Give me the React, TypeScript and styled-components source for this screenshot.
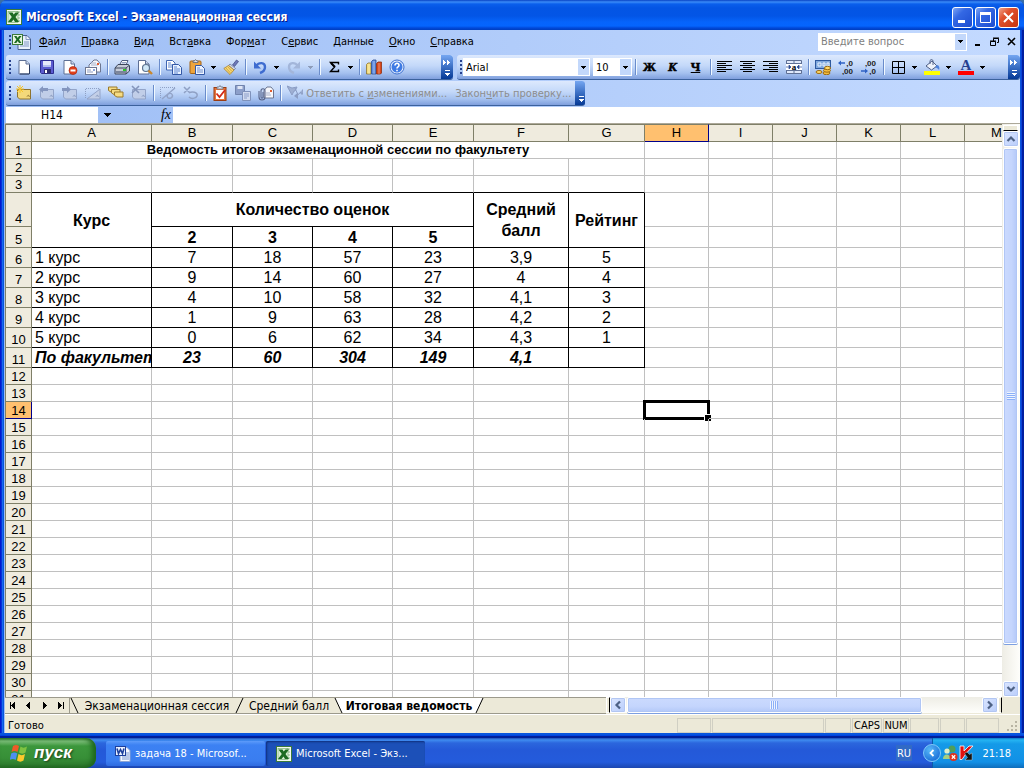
import React from "react";
import styled, { createGlobalStyle, css } from "styled-components";

const ui = `"DejaVu Sans Condensed", "DejaVu Sans", sans-serif`;
const arial = `"Liberation Sans", Arial, sans-serif`;

const GlobalStyle = createGlobalStyle`
  * { box-sizing: border-box; }
  html, body, #root { height: 100%; }
  body { margin: 0; overflow: hidden; font-family: ${ui}; font-size: 11px; color: #000; }
  button, input, select { font: inherit; color: inherit; margin: 0; padding: 0; border: 0; border-radius: 0; background: none; }
  svg { display: block; flex: none; }
`;

/* ---------- Window frame ---------- */

const Desktop = styled.div`
  display: flex;
  flex-direction: column;
  height: 100vh;
  background: #3a6ea5;
`;

const Window = styled.main`
  flex: 1;
  min-height: 0;
  display: flex;
  flex-direction: column;
  background: linear-gradient(90deg, #0019cf 0 1px, #0831d9 1px 2px, #166aee 2px 3px, #0855dd 3px calc(100% - 3px), #0a41d8 calc(100% - 3px) calc(100% - 2px), #001ea0 calc(100% - 2px));
  border-radius: 7px 7px 0 0;
  overflow: hidden;
`;

const TitleBar = styled.header`
  display: flex;
  align-items: center;
  height: 30px;
  flex: none;
  padding: 4px 5px 0 6px;
  background: linear-gradient(#0842c4 0, #3b8bf8 2px, #0a5fec 4px, #0455e4 8px, #0355e6 16px, #0664fb 22px, #0565fd 26px, #0148d8 28px, #003dbd 30px);
`;

const WindowTitle = styled.h1`
  flex: 1;
  margin: 0 0 0 4px;
  font: bold 12px/20px "DejaVu Sans Condensed", "DejaVu Sans", sans-serif;
  color: #fff;
  text-shadow: 1px 1px 0 #0a1883;
  white-space: nowrap;
`;

const CaptionButton = styled.button<{ $close?: boolean }>`
  display: grid;
  place-items: center;
  width: 21px;
  height: 21px;
  margin-left: 2px;
  border: 1px solid #fff;
  border-radius: 3px;
  background: ${(p) =>
    p.$close
      ? "linear-gradient(135deg, #f0a48c, #e0512e 35%, #c8350e)"
      : "linear-gradient(135deg, #7ea6f5, #3468e4 35%, #1c4cd0)"};
`;

const Client = styled.div`
  flex: 1;
  min-height: 0;
  display: flex;
  flex-direction: column;
  margin: 0 4px;
  padding-left: 1px;
  background: linear-gradient(90deg, #9ebef5, #c4daff);
`;

const WindowBottom = styled.div`
  flex: none;
  height: 5px;
  background: linear-gradient(#0855dd 0 2px, #0043e0 2px 3px, #001f9a 3px);
`;

/* ---------- Menus and toolbars ---------- */

const MenuBar = styled.nav`
  display: flex;
  align-items: center;
  height: 25px;
  flex: none;
  padding: 0 0 2px 1px;
`;

const MenuItem = styled.button`
  height: 20px;
  padding: 0 8px 0 7px;
  white-space: nowrap;
`;

const Grip = styled.span`
  flex: none;
  width: 6px;
  height: 14px;
  background: repeating-linear-gradient(#27418e 0 2px, transparent 2px 4px) 3px 0 / 2px 14px no-repeat;
`;

const Spacer = styled.span`
  flex: 1;
`;

const Gap = styled.span`
  flex: none;
  width: 3px;
`;

const Question = styled.label`
  display: flex;
  width: 149px;
  height: 18px;
  margin: 0 2px 0 0;
  background: #fff;
  border: 1px solid #fff;

  input { flex: 1; min-width: 0; padding-left: 2px; outline: 0; }
  input::placeholder { color: #7f7f7f; opacity: 1; }
`;

const DropCap = styled.span`
  display: grid;
  place-items: center;
  width: 11px;
  background: #c3d8fb;
`;

const MdiButton = styled.button`
  display: grid;
  place-items: center;
  width: 17px;
  height: 18px;
`;

const ToolRow = styled.div`
  display: flex;
  height: 26px;
  flex: none;
  padding: 0 0 1px 1px;
  gap: 4px;
`;

const Bar = styled.div<{ $grow?: boolean; $width?: number }>`
  display: flex;
  align-items: center;
  height: 25px;
  overflow: hidden;
  border-radius: 3px;
  border-bottom: 1px solid #3b619c;
  background: linear-gradient(#dde9fd, #c3d8f9 45%, #a5c1ef 75%, #7f9fdd);
  ${(p) => (p.$grow ? css`flex: 1; min-width: 0;` : css`width: ${p.$width}px; flex: none;`)}
`;

const Tool = styled.button`
  flex: none;
  display: grid;
  place-items: center;
  width: 23px;
  height: 22px;
`;

const Drop = styled.button`
  flex: none;
  display: grid;
  place-items: center;
  width: 11px;
  height: 22px;
`;

const FormulaDrop = styled(Drop)`
  height: 16px;
`;

const Divider = styled.span`
  flex: none;
  width: 2px;
  height: 16px;
  margin: 0 1px 0 3px;
  background: linear-gradient(90deg, #6a8ccb 50%, #f1f9ff 50%);
`;

const BarEnd = styled.button`
  flex: none;
  display: flex;
  flex-direction: column;
  justify-content: space-between;
  align-items: center;
  width: 12px;
  height: 24px;
  padding: 5px 0 3px;
  background: linear-gradient(#75a6f1, #3b6fc4 50%, #053995);
  border-radius: 0 3px 3px 0;
`;

const Combo = styled.label<{ $width: number }>`
  display: flex;
  flex: none;
  width: ${(p) => p.$width}px;
  height: 18px;
  background: #fff;
  padding: 1px;

  select { flex: 1; min-width: 0; appearance: none; padding-left: 2px; outline: 0; }
`;

const TextTool = styled.button`
  display: flex;
  align-items: center;
  flex: none;
  height: 22px;
  padding: 0 4px;
  color: #8d8d8d;
  white-space: nowrap;
`;

const Letter = styled.b<{ $italic?: boolean; $under?: boolean }>`
  font: bold 13px/14px "Liberation Serif", serif;
  -webkit-text-stroke: 0.5px #000;
  font-style: ${(p) => (p.$italic ? "italic" : "normal")};
  text-decoration: ${(p) => (p.$under ? "underline" : "none")};
`;

/* ---------- Formula bar ---------- */

const FormulaBar = styled.div`
  display: flex;
  height: 16px;
  flex: none;
  padding-left: 1px;
`;

const NameBox = styled.input`
  width: 92px;
  height: 16px;
  background: #fff;
  text-align: center;
  font-size: 12px;
  outline: 0;
`;

const FormulaTools = styled.div`
  display: flex;
  justify-content: space-between;
  align-items: center;
  width: 75px;
  padding: 0 2px 0 4px;
`;

const FxButton = styled.button`
  font: italic 14px/14px "Liberation Serif", serif;
`;

const FormulaInput = styled.input`
  flex: 1;
  min-width: 0;
  background: #fff;
  outline: 0;
`;

/* ---------- Sheet ---------- */

const SheetArea = styled.div`
  flex: 1;
  min-height: 0;
  display: flex;
  background: #fff;
  border-top: 1px solid #aca899;
`;

const GridView = styled.div`
  flex: 1;
  min-width: 0;
  overflow: hidden;
`;

const Grid = styled.table<{ $width: number }>`
  table-layout: fixed;
  width: ${(p) => p.$width}px;
  border-collapse: separate;
  border-spacing: 0;
  font-family: ${arial};
  font-size: 16px;
  line-height: 18px;
`;

const ColHead = styled.th<{ $on?: boolean }>`
  height: 18px;
  padding: 0;
  border: solid #7f7f68;
  border-width: 1px 1px 1px 0;
  background: ${(p) => (p.$on ? "#ffc06f" : "#efebde")};
  ${(p) => p.$on && css`border-right-color: #00008b; border-bottom-color: #00008b;`}
  font-weight: normal;
  font-size: 13px;
  line-height: 16px;
`;

const Corner = styled(ColHead)`
  border-left-width: 1px;
`;

const RowHead = styled.th<{ $on?: boolean }>`
  padding: 0;
  vertical-align: bottom;
  border: solid #7f7f68;
  border-width: 0 1px 1px 1px;
  background: ${(p) => (p.$on ? "#ffc06f" : "#efebde")};
  ${(p) => p.$on && css`border-right-color: #00008b; border-bottom-color: #00008b;`}
  font-weight: normal;
  font-size: 13px;
  line-height: 15px;
`;

const Row = styled.tr<{ $h: number }>`
  height: ${(p) => p.$h}px;
`;

type CellProps = { $right?: string; $bottom?: string; $left?: boolean; $bold?: boolean; $italic?: boolean; $title?: boolean };

const Cell = styled.td<CellProps>`
  position: relative;
  padding: ${(p) => (p.$left ? "0 0 0 3px" : "0")};
  border: solid;
  border-width: 0 1px 1px 0;
  border-color: transparent ${(p) => p.$right ?? "#c0c0c0"} ${(p) => p.$bottom ?? "#c0c0c0"} transparent;
  text-align: ${(p) => (p.$left ? "left" : "center")};
  font-weight: ${(p) => (p.$bold ? "bold" : "normal")};
  font-style: ${(p) => (p.$italic ? "italic" : "normal")};
  line-height: ${(p) => (p.$title ? 16 : 19)}px;
  ${(p) => p.$title && css`font-size: 13px;`}
  white-space: nowrap;
  overflow: ${(p) => (p.$left ? "hidden" : "visible")};
`;

const HeadCell = styled(Cell)`
  line-height: 21px;
`;

const Selection = styled.span`
  position: absolute;
  inset: -2px;
  border: 3px solid #000;

  &::after {
    content: "";
    position: absolute;
    right: -4px;
    bottom: -4px;
    width: 6px;
    height: 6px;
    background: #000;
    border: solid #fff;
    border-width: 1px 0 0 1px;
  }
`;

/* ---------- Scroll bars ---------- */

const VerticalScroll = styled.div`
  flex: none;
  display: flex;
  flex-direction: column;
  width: 18px;
  padding: 1px 2px 0 1px;
  background: linear-gradient(90deg, #eeede5, #fefefb);
`;

const SplitBox = styled.span<{ $side?: boolean }>`
  flex: none;
  background: #ece9d8;
  border: 1px solid #fff;
  ${(p) =>
    p.$side
      ? css`width: 4px; height: 16px; border-right: 1px solid #000;`
      : css`height: 6px; border-bottom: 1px solid #000;`}
`;

const ScrollButton = styled.button`
  flex: none;
  display: grid;
  place-items: center;
  width: 16px;
  height: 16px;
  border: 1px solid #fff;
  border-radius: 2px;
  background: linear-gradient(135deg, #dbe6ff, #b9cdfb);
  box-shadow: inset 0 0 0 1px #b2c6f2;
`;

const Track = styled.div<{ $across?: boolean }>`
  flex: 1;
  min-height: 0;
  min-width: 0;
  display: flex;
  flex-direction: ${(p) => (p.$across ? "row" : "column")};
  padding: ${(p) => (p.$across ? "0 0 0 1px" : "1px 0 0")};
`;

const Thumb = styled.div<{ $across?: boolean; $size: number }>`
  flex: ${(p) => p.$size} 1 0;
  display: grid;
  place-items: center;
  border: 1px solid #fff;
  border-radius: 2px;
  box-shadow: inset 0 0 0 1px #b0c6f5, 0 1px 0 #7d9fe0;
  background: linear-gradient(${(p) => (p.$across ? "180deg" : "90deg")}, #cbdafe, #c4d5fd 60%, #b3c8f8);
`;

const TrackRest = styled.div<{ $size: number }>`
  flex: ${(p) => p.$size} 1 0;
`;

const Ridges = styled.span<{ $across?: boolean }>`
  width: 8px;
  height: 8px;
  background: repeating-linear-gradient(${(p) => (p.$across ? "90deg" : "180deg")}, #eef4fe 0 1px, #8cb0f8 1px 2px);
`;

/* ---------- Tab strip and status bar ---------- */

const SheetFooter = styled.div`
  flex: none;
  display: flex;
  height: 18px;
  background: #ece9d8;
  border-bottom: 1px solid #fff;
`;

const TabStrip = styled.div`
  flex: 600 1 0;
  min-width: 0;
  display: flex;
  height: 17px;
  overflow: hidden;
  border: solid #9c9a8c;
  border-width: 1px 0;
`;

const TabNav = styled.button`
  flex: none;
  display: grid;
  place-items: center;
  width: 16px;
`;

const TabStart = styled.span`
  flex: none;
  width: 1px;
  background: #9c9a8c;
`;

const Tab = styled.button<{ $active?: boolean; $width: number }>`
  flex: none;
  width: ${(p) => p.$width}px;
  background: ${(p) => (p.$active ? "#fff" : "transparent")};
  font-weight: ${(p) => (p.$active ? "bold" : "normal")};
  font-size: 12px;
  line-height: 14px;
  white-space: nowrap;
`;

const HorizontalScroll = styled.div`
  flex: 396 1 0;
  display: flex;
  height: 16px;
  margin-right: 18px;
  background: linear-gradient(#eeede5, #fefefb);
`;

const StatusBar = styled.footer`
  flex: none;
  display: flex;
  align-items: center;
  gap: 1px;
  height: 18px;
  padding: 3px 1px 0 3px;
  background: #ece9d8;
`;

const StatusText = styled.span`
  flex: 1;
`;

const StatusCell = styled.span<{ $width: number }>`
  width: ${(p) => p.$width}px;
  height: 15px;
  border: 1px solid #d0cfc3;
  text-align: center;
  line-height: 14px;
  white-space: nowrap;
`;

/* ---------- Taskbar ---------- */

const Taskbar = styled.footer`
  flex: none;
  display: flex;
  height: 30px;
  color: #fff;
  background: linear-gradient(#1f4fb8 0, #3f8cf0 2px, #2b66dd 5px, #2459d8 12px, #245bdc 24px, #1c46b0 30px);
`;

const StartButton = styled.button`
  flex: none;
  display: flex;
  align-items: center;
  gap: 4px;
  width: 96px;
  padding-left: 10px;
  border-radius: 0 10px 10px 0;
  background: linear-gradient(#2f7d2f 0, #7fc07c 3px, #3c973c 8px, #378f37 20px, #2f7f2f 26px, #246a24);
  box-shadow: inset -4px 0 5px #1e671e;
  font: italic bold 17px/24px ${arial};
  text-shadow: 1px 1px 2px #1c3f1c;
`;

const Task = styled.button<{ $active?: boolean }>`
  flex: none;
  display: flex;
  align-items: center;
  gap: 4px;
  width: 159px;
  height: 25px;
  margin: 3px 0 0 ${(p) => (p.$active ? 1 : 10)}px;
  padding-left: ${(p) => (p.$active ? 10 : 9)}px;
  border-radius: 2px;
  background: ${(p) => (p.$active ? "#1c50b8" : "linear-gradient(#5d9bfa, #3c81f3 4px, #3a7df0 20px, #2f6be0)")};
  box-shadow: ${(p) => (p.$active ? "inset 1px 1px 2px #0f2f7c" : "none")};
  white-space: nowrap;
`;

const Language = styled.button`
  align-self: center;
  width: 16px;
  height: 16px;
  margin: 0 20px 0 auto;
  background: #316ac5;
`;

const Tray = styled.div`
  flex: none;
  display: flex;
  align-items: center;
  width: 92px;
  padding-right: 13px;
  background: linear-gradient(#0d78c8 0, #25b4f2 2px, #149ae8 6px, #1290e6 24px, #0f6dbb);
  border-left: 1px solid #0d5aa8;
`;

const TrayToggle = styled.button`
  display: grid;
  place-items: center;
  width: 18px;
  height: 18px;
  margin: 0 1px 0 -10px;
  border-radius: 9px;
  border: 1px solid #7fc8f8;
  background: radial-gradient(circle at 6px 5px, #58b8f8, #0a5cd0);
`;

const Clock = styled.time`
  margin-left: auto;
`;

/* ---------- Glyphs ---------- */

const Caret = ({ color = "#000" }: { color?: string }) => (
  <svg width="5" height="3" viewBox="0 0 5 3" shapeRendering="crispEdges">
    <path d="M0 0h5v1H4v1H3v1H2V2H1V1H0z" fill={color} />
  </svg>
);

const WideCaret = () => (
  <svg width="7" height="4" viewBox="0 0 7 4" shapeRendering="crispEdges">
    <path d="M0 0h7v1H6v1H5v1H4v1H3V3H2V2H1V1H0z" />
  </svg>
);

const Chevron = ({ turn }: { turn: number }) => (
  <svg width="10" height="10" viewBox="0 0 10 10">
    <path d="M1.5 7 5 3.5 8.5 7" fill="none" stroke="#4d6185" strokeWidth="2.2" transform={`rotate(${turn} 5 5)`} />
  </svg>
);

const Svg = ({ children, size = 16 }: { children: React.ReactNode; size?: number }) => (
  <svg width={size} height={size} viewBox="0 0 16 16">{children}</svg>
);

const page = "M3 1.5h7l3.500 3.500v10H3z";

const ExcelIcon = ({ size = 16 }: { size?: number }) => (
  <Svg size={size}>
    <rect x=".5" y=".5" width="15" height="15" fill="#f4faf0" stroke="#3c7a3a" />
    <path d="M10 3h4M10 6h4M10 9h4M10 12h4" stroke="#8fb88c" />
    <rect x="2" y="2.500" width="10" height="11" fill="#d9efd3" stroke="#6aa565" strokeWidth=".6" />
    <path d="M2.500 3.500h4l1.200 2 1.800-2h3.500L9.500 8l3.500 5h-4L7.500 10.500 5.500 13H2L5.800 8z" fill="#1d6b23" />
  </Svg>
);

const WorkbookIcon = () => (
  <svg width="20" height="18" viewBox="0 0 20 18">
    <path d="M6 2.500h9l3.500 3.500v10.500H6z" fill="#e9f0fc" stroke="#48608f" />
    <path d="M12 9h5M12 11h5M8 13h9M14 3v3.500h4" fill="none" stroke="#8398c4" />
    <rect x=".5" y="1.500" width="10" height="10" fill="#e6f5e0" stroke="#3c7a3a" />
    <path d="M2 3h2.500l1.200 2L7 3h2.500L7 6.500 9.500 10H7L5.700 8 4.300 10H2l2.400-3.500z" fill="#1d6b23" />
  </svg>
);

const WordIcon = () => (
  <Svg>
    <path d="M5 1.500h7l3 3v11H5z" fill="#f5f8ff" stroke="#8ba3d4" />
    <path d="M11 7h3M11 9h3M7 11h7M7 13h7" stroke="#7b97cf" />
    <rect x=".5" y=".5" width="10" height="9" fill="#e8f0ff" stroke="#1d3f9c" />
    <path d="M2 2.500 3.500 7.500 5.500 3.500 7.500 7.500 9 2.500" fill="none" stroke="#1d3f9c" strokeWidth="1.600" />
  </Svg>
);

const NewIcon = () => (
  <Svg>
    <path d={page} fill="#fff" stroke="#5d6f94" />
    <path d="M10 1.500v3.500h3.500" fill="#cdd9ef" stroke="#5d6f94" />
    <path d="M13.500 6v9M4 15h9" stroke="#2b3c62" />
  </Svg>
);

const SaveIcon = () => (
  <Svg>
    <path d="M1.500 1.500h13v13h-12l-1-1z" fill="#5b5bd0" stroke="#2c2c91" />
    <path d="M4 2h8v6H4z" fill="#e6e9fb" />
    <path d="M4 6h8v2H4z" fill="#b6bfee" />
    <path d="M5 10h7v4.500H5z" fill="#2c2c70" />
    <path d="M6 11h2v3H6z" fill="#fff" />
  </Svg>
);

const PermissionIcon = () => (
  <Svg>
    <path d="M2 1.500h7l3.500 3.500v10H2z" fill="#fff" stroke="#5d6f94" />
    <path d="M9 1.500v3.500h3.500" fill="#cdd9ef" stroke="#5d6f94" />
    <circle cx="11" cy="11.500" r="4" fill="#e2401c" stroke="#a82208" strokeWidth=".6" />
    <path d="M8.500 11.500h5" stroke="#fff" strokeWidth="1.800" />
  </Svg>
);

const MailIcon = () => (
  <Svg>
    <path d="M4 6 9 1h3l3.500 4v8H4z" fill="#f6f7fb" stroke="#6c7690" />
    <path d="M6 6h7M6 4h5" stroke="#a8b2ca" />
    <path d="M12 4h2v2h-2z" fill="#e35b2c" />
    <rect x=".5" y="8.500" width="11" height="7" fill="#fff" stroke="#6c7690" />
    <path d="M2 11h4M2 13h6" stroke="#8b9ac0" />
    <path d="M8 10h2v2H8z" fill="#8ba6dc" />
  </Svg>
);

const PrintIcon = () => (
  <Svg>
    <path d="M5.500 6 8 1.500h6L12 6z" fill="#fff" stroke="#4d5c80" />
    <path d="M8 3.500h4M7.500 5h4" stroke="#92a2c5" />
    <path d="M1 9l3-3.500h10.500l1 1.500v5L12 15H1z" fill="#c6ccd8" stroke="#3d465c" />
    <path d="M1 9h11l3-2.500M12 9v6" fill="none" stroke="#3d465c" />
    <path d="M1.500 12h10v2h-10z" fill="#7b859b" />
    <path d="M9 10h3v2H9z" fill="#28c828" />
  </Svg>
);

const PreviewIcon = () => (
  <Svg>
    <path d="M1.500 1.500h7l3.500 3.500v10h-10.500z" fill="#fff" stroke="#5d6f94" />
    <path d="M8.500 1.500v3.500h3.500" fill="#cdd9ef" stroke="#5d6f94" />
    <circle cx="9" cy="9" r="3.500" fill="#cfe7f7" stroke="#5e7390" strokeWidth="1.200" />
    <path d="m11.500 11.500 3.500 3.500" stroke="#c9872c" strokeWidth="2.400" />
  </Svg>
);

const CopyIcon = () => (
  <Svg>
    <path d="M.5 1.500h6l2.500 2.500v7H.5z" fill="#fff" stroke="#3f66b3" />
    <path d="M2 4h3M2 6h5M2 8h5" stroke="#5f87d2" />
    <path d="M6.500 5.500h6l3 3v7h-9z" fill="#e8f1ff" stroke="#3358a6" />
    <path d="M8 8h3M8 10h6M8 12h6M8 14h4" stroke="#5f87d2" />
  </Svg>
);

const PasteIcon = () => (
  <Svg>
    <rect x="1" y="2" width="11" height="12.500" rx="1" fill="#eda43c" stroke="#a26317" />
    <path d="M4 3.500V2h1.500l1-1.500 1.500 1.500H9v1.500z" fill="#dfe3ea" stroke="#5f6675" strokeWidth=".8" />
    <path d="M6.500 6.500h6l3 3v6h-9z" fill="#eef4ff" stroke="#3358a6" />
    <path d="M8 9h3M8 11h6M8 13h6" stroke="#6f8ecb" />
  </Svg>
);

const BrushIcon = () => (
  <Svg>
    <path d="m9.500 6 4-5 2 1.500-4 5z" fill="#6d78b8" stroke="#3d4880" strokeWidth=".7" />
    <path d="m7 5 5.500 4.500-1.500 1.500L5.500 6.500z" fill="#d3d7e6" stroke="#636c8c" strokeWidth=".7" />
    <path d="M5.500 6.500 11 11l-4 4.500L.8 9.500z" fill="#f7d873" stroke="#a9802c" strokeWidth=".8" />
    <path d="m3 9 4.500 5M5 8l4 4.500" stroke="#c79a3a" strokeWidth=".8" />
  </Svg>
);

const UndoIcon = ({ color = "#3e6cd0", flip }: { color?: string; flip?: boolean }) => (
  <Svg>
    <g transform={flip ? "translate(16 0) scale(-1 1)" : undefined}>
      <path d="M4 7c3-4 9-4 9 1 0 3-2 5-5 6" fill="none" stroke={color} strokeWidth="2.400" />
      <path d="M2 2.500v7h7z" fill={color} />
    </g>
  </Svg>
);

const SigmaIcon = () => (
  <Svg>
    <path d="M12.500 5.500V3.500H4.500L8.500 8l-4 4.500h8v-2" fill="none" stroke="#000" strokeWidth="1.400" />
    <path d="m5 4 4 4" stroke="#000" strokeWidth="2" />
  </Svg>
);

const ChartIcon = () => (
  <Svg>
    <path d="M.5 5.500 2 4h3v11H.5z" fill="#f4dc7b" stroke="#8d7430" strokeWidth=".8" />
    <path d="M5.500 2.500 7 1h3v14H5.500z" fill="#5f8ee0" stroke="#2e4f96" strokeWidth=".8" />
    <path d="M10.500 4.500 12 3h3.500v11l-1 1h-4z" fill="#d9491c" stroke="#8f2f10" strokeWidth=".8" />
    <path d="M3 5v10M8 2v13M13 4v11" stroke="#fff" strokeOpacity=".4" />
  </Svg>
);

const HelpIcon = () => (
  <Svg>
    <circle cx="8" cy="8" r="7" fill="#e6eefc" stroke="#3b6fd0" />
    <circle cx="8" cy="8" r="5.500" fill="#3f7be4" />
    <path d="M6 6.500c0-3 4.200-2.800 4 0C9.900 8 8 7.800 8 9.500" fill="none" stroke="#fff" strokeWidth="1.600" />
    <path d="M7.200 10.800h1.600v1.500H7.200z" fill="#fff" />
  </Svg>
);

const note = "M1.500 4.500h13v9.500h-11l-2-2z";

const NoteIcon = ({ kind }: { kind: "new" | "prev" | "next" | "show" | "all" | "delete" }) => {
  const on = kind === "new";
  if (kind === "all")
    return (
      <Svg>
        {[0, 1, 2].map((i) => (
          <path key={i} d={`M${0.5 + i * 3} ${2 + i * 2.5}h8.500v5h-6l-2.500-1.500z`} fill="#f6dc83" stroke="#9b7b2c" />
        ))}
      </Svg>
    );
  return (
    <Svg>
      {kind === "show" ? (
        <>
          <path d="M.5 13V3.500h14" fill="none" stroke="#8fa0c4" strokeDasharray="1 1" />
          <path d="M15 4v10H2z" fill="#c3cfe7" stroke="#93a4c8" />
        </>
      ) : (
        <path d={note} fill={on ? "#f3d87a" : "#c1cee8"} stroke={on ? "#8e7430" : "#93a4c8"} />
      )}
      <path d="M11 11.500c1-2 3-1 2 .500" fill="none" stroke={on ? "#8e7430" : "#8597bd"} />
      {on && <path d="M4 0v8M0 4h8M1 1l6 6M7 1 1 7" stroke="#f8c326" strokeWidth="1" />}
      {kind === "prev" && <path d="M0 4.500 4 1v2h5v3H4v2z" fill="#8496bf" />}
      {kind === "next" && <path d="M9 4.500 5 1v2H0v3h5v2z" fill="#8496bf" />}
      {kind === "delete" && <path d="m1 1 7 7M8 1 1 8" stroke="#8495bb" strokeWidth="1.600" />}
    </Svg>
  );
};

const InkShowIcon = () => (
  <Svg>
    <path d="M.5 13V2.500h15" fill="none" stroke="#8fa0c4" strokeDasharray="1 1" />
    <path d="M2 14 15 3M8 9c4-2 6 2 3 4-3 1-5-1-3-4" fill="none" stroke="#93a4c8" strokeWidth="1.400" />
  </Svg>
);

const InkDeleteIcon = () => (
  <Svg>
    <path d="m1 2 6 6M7 2 1 8M6 8c3-2 9-1 8 3-1 3-6 3-8 1" fill="none" stroke="#8fa0c4" strokeWidth="1.500" />
  </Svg>
);

const TaskIcon = () => (
  <Svg>
    <rect x="2" y="2.500" width="12" height="13" fill="#e8743a" stroke="#9b3c12" />
    <path d="M4 5h8v9H4z" fill="#fff" />
    <path d="M5 4V2h2l1-1.500L9 2h2v2z" fill="#e4e7ee" stroke="#666f83" strokeWidth=".8" />
    <path d="m4.500 8.500 3 3.500L13 5" fill="none" stroke="#d12b1b" strokeWidth="1.800" />
  </Svg>
);

const UpdateIcon = () => (
  <Svg>
    <path d="M.5.500h9v9h-9z" fill="#8c9fca" stroke="#7184ae" />
    <path d="M2.500 1h5v3h-5z" fill="#dfe6f5" />
    <path d="M7.500 6.500h8v9h-8z" fill="#d2dcf0" stroke="#7f92bb" />
    <path d="M9 9h5M9 11h5M9 13h3" stroke="#8c9fca" />
  </Svg>
);

const AttachIcon = () => (
  <Svg>
    <path d="M6 5.500 9 2h4l2.500 3v8H6z" fill="#f6f7fb" stroke="#6c7690" />
    <path d="M8 8h4M8 10h5" stroke="#a8b2ca" />
    <path d="M12 5h2v2h-2z" fill="#e35b2c" />
    <path d="M1 6v6c0 4 6 4 6 0V6c0-3-4-3-4 0v6c0 1.500 2 1.500 2 0V7" fill="none" stroke="#59668a" strokeWidth="1.100" />
  </Svg>
);

const ReplyIcon = () => (
  <Svg>
    <path d="M0 1l5 9 2-4 1 0L10 2 5 3zM8 3l3 7M10 10.500l4-3.500v2h2V5h-1" fill="#9fb0d3" stroke="#8b9dc4" />
    <path d="m7 11 4-3.500V14z" fill="#8b9dc4" />
  </Svg>
);

const AlignIcon = ({ kind }: { kind: "left" | "center" | "right" }) => (
  <Svg>
    <g stroke="#000">
      {[2.5, 4.5, 6.5, 8.5, 10.5, 12.5].map((y, i) => {
        const w = i % 2 ? 9 : 15;
        const x = kind === "left" ? 0 : kind === "right" ? 15 - w : (15 - w) / 2;
        return <path key={y} d={`M${x} ${y}h${w}`} shapeRendering="crispEdges" />;
      })}
    </g>
  </Svg>
);

const MergeIcon = () => (
  <Svg>
    <path d="M.5 1.500h15v13H.5zM.5 4.500h15M.5 11.500h15M8 1.500v3M8 11.500v3" fill="#dfe9fb" stroke="#5f7095" />
    <path d="M0 5h16v6H0z" fill="#fff" />
    <path d="M0 8h4M12 8h4M3 6v4l2-2zM13 6v4l-2-2z" fill="#2b4a94" stroke="#2b4a94" strokeWidth=".7" />
    <text x="8" y="10.500" textAnchor="middle" fontFamily="Liberation Serif, serif" fontWeight="bold" fontSize="9">a</text>
  </Svg>
);

const MoneyIcon = () => (
  <Svg>
    <rect x=".5" y="1.500" width="15" height="8" fill="#7fa8de" stroke="#2d599f" />
    <path d="M3 4h3v3H3zM8 4h2v3H8zM12 4h2v3h-2z" fill="none" stroke="#e8f2ff" />
    <ellipse cx="11.500" cy="14" rx="3.500" ry="1.700" fill="#f5bd3d" stroke="#9b6a12" />
    <ellipse cx="12" cy="11.500" rx="3.500" ry="1.700" fill="#f5bd3d" stroke="#9b6a12" />
    <ellipse cx="12.500" cy="9" rx="3" ry="1.700" fill="#ffd968" stroke="#9b6a12" />
    <ellipse cx="4" cy="13" rx="3" ry="1.500" fill="#ffd968" stroke="#9b6a12" />
  </Svg>
);

const DecimalIcon = ({ more }: { more?: boolean }) => (
  <Svg>
    <g fontFamily="Liberation Sans, sans-serif" fontWeight="bold" fontSize="8" fill="#222" textAnchor="end">
      <text x="15" y="7">{more ? ",0" : ",00"}</text>
      <text x="15" y="15">{more ? ",00" : ",0"}</text>
    </g>
    {more ? (
      <path d="M0 4l3-2.500V3.300h4v1.500H3v1.700z" fill="#2f62c4" />
    ) : (
      <path d="M7 12l-3-2.500v1.800H0v1.500h4v1.700z" fill="#2f62c4" />
    )}
  </Svg>
);

const BordersIcon = () => (
  <Svg>
    <path d="M2.500 2.500h12v12h-12zM8.500 2.500v12M2.500 8.500h12" fill="none" stroke="#000" />
  </Svg>
);

const FillIcon = () => (
  <Svg>
    <path d="m2 7 6-5 5 5-5.500 4z" fill="#eef3fb" stroke="#4e5f86" />
    <path d="M6 5V1.500c1-1.500 3-1 3 .5V6" fill="none" stroke="#55648a" />
    <path d="M13 6c2 0 3 3 2 5-1-2-3-2-4-3z" fill="#4d82dc" />
    <path d="M0 12h16v4H0z" fill="#ff0" />
  </Svg>
);

const FontColorIcon = () => (
  <Svg>
    <text x="8" y="11" textAnchor="middle" fontFamily="Liberation Serif, serif" fontWeight="bold" fontSize="15" fill="#27408f">A</text>
    <path d="M0 12h16v4H0z" fill="#f00" />
  </Svg>
);

const BarEndGlyph = ({ more }: { more?: boolean }) => (
  <>
    <svg width="8" height="5" viewBox="0 0 8 5" shapeRendering="crispEdges">
      {more && <path d="M0 0h1v1h1v1h1v1H2v1H1v1H0zM4 0h1v1h1v1h1v1H6v1H5v1H4z" fill="#fff" />}
    </svg>
    <svg width="7" height="6" viewBox="0 0 7 6" shapeRendering="crispEdges">
      <path d="M1 0h5v1H1zM1 3h5v1H5v1H4v1H3V5H2V4H1z" fill="#fff" />
    </svg>
  </>
);

const End = ({ more, label }: { more?: boolean; label: string }) => (
  <BarEnd aria-label={label}><BarEndGlyph more={more} /></BarEnd>
);

const WindowsFlag = () => (
  <svg width="20" height="20" viewBox="0 0 20 20">
    <path d="M3 3c2-1.500 4-1.500 6 0L7.500 9c-2-1.500-4-1.500-6 0z" fill="#ef5a28" />
    <path d="M10.500 3.500c2 1.500 4 1.500 6.500 0L15.500 9.500c-2 1.500-4.500 1.500-6.500 0z" fill="#7fc241" />
    <path d="M1.200 10.500c2-1.500 4-1.500 6 0L5.700 17c-2-1.500-4-1.500-6 0z" fill="#4e8ff0" />
    <path d="M8.500 11c2 1.500 4.500 1.500 6.500 0L13.500 17.500c-2 1.500-4.500 1.500-6.500 0z" fill="#fbc92c" />
  </svg>
);

const MessengerIcon = () => (
  <Svg>
    <circle cx="10" cy="4" r="3.500" fill="#4e9e5a" />
    <path d="M5 14c0-8 9-8 10 0z" fill="#3c7fae" />
    <circle cx="5" cy="6" r="2.600" fill="#dfeec8" />
    <path d="M1 14c0-6 7-6 8 0z" fill="#a4d080" />
    <circle cx="11.500" cy="12" r="4" fill="#e1301b" />
    <path d="m9.800 10.300 3.400 3.400M13.200 10.300l-3.400 3.400" stroke="#fff" strokeWidth="1.300" />
  </Svg>
);

const AntivirusIcon = () => (
  <Svg>
    <path d="M2 1h4v5l5-5h4L8.500 8 4 14.500H2z" fill="#e01010" stroke="#fff" strokeWidth=".8" />
    <path d="M6.500 8.500 9 7l2.500 2.500L14 8v7H7l2.500-2.500z" fill="#111" stroke="#ddd" strokeWidth=".4" />
  </Svg>
);

/* ---------- Data ---------- */

const menus: [string, string, string][] = [
  ["", "Ф", "айл"], ["", "П", "равка"], ["", "В", "ид"], ["Вст", "а", "вка"], ["Фор", "м", "ат"],
  ["С", "е", "рвис"], ["", "Д", "анные"], ["", "О", "кно"], ["", "С", "правка"],
];

const columns = "ABCDEFGHIJKLM".split("");
const widths = columns.map((_, i) => [120, 81, 80, 80, 81, 95, 76][i] ?? 64);
const headWidth = 27;
const gridWidth = widths.reduce((sum, w) => sum + w, headWidth);

const courses: [string, ...string[]][] = [
  ["1 курс", "7", "18", "57", "23", "3,9", "5"],
  ["2 курс", "9", "14", "60", "27", "4", "4"],
  ["3 курс", "4", "10", "58", "32", "4,1", "3"],
  ["4 курс", "1", "9", "63", "28", "4,2", "2"],
  ["5 курс", "0", "6", "62", "34", "4,3", "1"],
  ["По факультету", "23", "60", "304", "149", "4,1", ""],
];

const blanks = (from: number) => columns.slice(from).map((c) => <Cell key={c} />);

const k = "#000";

const Sheet = () => (
  <Grid $width={gridWidth}>
    <colgroup>
      <col width={headWidth} />
      {columns.map((c, i) => <col key={c} width={widths[i]} />)}
    </colgroup>
    <thead>
      <tr>
        <Corner />
        {columns.map((c) => <ColHead key={c} scope="col" $on={c === "H"}>{c}</ColHead>)}
      </tr>
    </thead>
    <tbody>
      <Row $h={17}>
        <RowHead scope="row">1</RowHead>
        <Cell colSpan={7} $bold $title>Ведомость итогов экзаменационной сессии по факультету</Cell>
        {blanks(7)}
      </Row>
      <Row $h={17}>
        <RowHead scope="row">2</RowHead>
        {blanks(0)}
      </Row>
      <Row $h={17}>
        <RowHead scope="row">3</RowHead>
        {columns.map((c, i) => <Cell key={c} $bottom={i < 7 ? k : undefined} />)}
      </Row>
      <Row $h={34}>
        <RowHead scope="row">4</RowHead>
        <HeadCell rowSpan={2} $right={k} $bottom={k} $bold>Курс</HeadCell>
        <HeadCell colSpan={4} $right={k} $bottom={k} $bold>Количество оценок</HeadCell>
        <HeadCell rowSpan={2} $right={k} $bottom={k} $bold>Средний<br />балл</HeadCell>
        <HeadCell rowSpan={2} $right={k} $bottom={k} $bold>Рейтинг</HeadCell>
        {blanks(7)}
      </Row>
      <Row $h={21}>
        <RowHead scope="row">5</RowHead>
        {["2", "3", "4", "5"].map((n) => <Cell key={n} $right={k} $bottom={k} $bold>{n}</Cell>)}
        {blanks(7)}
      </Row>
      {courses.map((row, r) => (
        <Row key={row[0]} $h={20}>
          <RowHead scope="row">{r + 6}</RowHead>
          {row.map((v, i) => (
            <Cell key={i} $left={i === 0} $right={k} $bottom={k} $bold={r === 5} $italic={r === 5}>{v}</Cell>
          ))}
          {blanks(7)}
        </Row>
      ))}
      {Array.from({ length: 20 }, (_, i) => i + 12).map((n) => (
        <Row key={n} $h={17}>
          <RowHead scope="row" $on={n === 14}>{n}</RowHead>
          {columns.map((c) => <Cell key={c}>{n === 14 && c === "H" && <Selection />}</Cell>)}
        </Row>
      ))}
    </tbody>
  </Grid>
);

const navPaths = [
  "M0 0h1v7H0zM5 0v7H4V6H3V5H2V4H1V3h1V2h1V1h1V0z",
  "M4 0v7H3V6H2V5H1V4H0V3h1V2h1V1h1V0z",
  "M1 0v7h1V6h1V5h1V4h1V3H4V2H3V1H2V0z",
  "M5 0h1v7H5zM0 0v7h1V6h1V5h1V4h1V3H3V2H2V1H1V0z",
];
const navLabels = ["Первый лист", "Предыдущий лист", "Следующий лист", "Последний лист"];

/* Slanted edge between two sheet tabs */
const Edge = ({ back, fill }: { back?: boolean; fill?: "left" | "right" }) => (
  <svg width="9" height="15" viewBox="0 0 9 15">
    {fill === "right" && <path d="M1 0h8v15H8z" fill="#fff" />}
    {fill === "left" && <path d="M8 0H0v15h1z" fill="#fff" />}
    <path d={back ? "M1 0 8 15" : "M8 0 1 15"} stroke="#000" fill="none" />
  </svg>
);

export default function App() {
  return (
    <Desktop>
      <GlobalStyle />
      <Window>
        <TitleBar>
          <ExcelIcon />
          <WindowTitle>Microsoft Excel - Экзаменационная сессия</WindowTitle>
          <CaptionButton aria-label="Свернуть">
            <svg width="13" height="13"><path d="M2 9h7v3H2z" fill="#fff" /></svg>
          </CaptionButton>
          <CaptionButton aria-label="Развернуть">
            <svg width="13" height="13"><path d="M1.500 2.500h10v9h-10zM1 3h11" fill="none" stroke="#fff" /><path d="M1 1h11v3H1z" fill="#fff" /></svg>
          </CaptionButton>
          <CaptionButton $close aria-label="Закрыть">
            <svg width="13" height="13"><path d="m2 2 9 9M11 2 2 11" stroke="#fff" strokeWidth="2" /></svg>
          </CaptionButton>
        </TitleBar>
        <Client>
          <MenuBar>
            <Grip />
            <WorkbookIcon />
            {menus.map(([a, u, b]) => <MenuItem key={a + u + b}>{a}<u>{u}</u>{b}</MenuItem>)}
            <Spacer />
            <Question>
              <input aria-label="Введите вопрос" placeholder="Введите вопрос" />
              <DropCap><Caret /></DropCap>
            </Question>
            <MdiButton aria-label="Свернуть книгу"><svg width="10" height="10"><path d="M2 7h5v2H2z" /></svg></MdiButton>
            <MdiButton aria-label="Восстановить книгу">
              <svg width="10" height="10"><path d="M3.500 4V1.500h5v4H7M3 1h6M.5 4.500h5v4h-5zM0 4h6" fill="none" stroke="#000" /></svg>
            </MdiButton>
            <MdiButton aria-label="Закрыть книгу"><svg width="10" height="10"><path d="m1 1 7 7M8 1 1 8" stroke="#000" strokeWidth="1.600" /></svg></MdiButton>
          </MenuBar>
          <ToolRow>
            <Bar $width={447}>
              <Grip />
              <Tool aria-label="Создать"><NewIcon /></Tool>
              <Tool aria-label="Сохранить"><SaveIcon /></Tool>
              <Tool aria-label="Разрешения"><PermissionIcon /></Tool>
              <Tool aria-label="Сообщение"><MailIcon /></Tool>
              <Divider />
              <Tool aria-label="Печать"><PrintIcon /></Tool>
              <Tool aria-label="Предварительный просмотр"><PreviewIcon /></Tool>
              <Divider />
              <Tool aria-label="Копировать"><CopyIcon /></Tool>
              <Tool aria-label="Вставить"><PasteIcon /></Tool>
              <Drop aria-label="Параметры вставки"><Caret /></Drop>
              <Tool aria-label="Формат по образцу"><BrushIcon /></Tool>
              <Divider />
              <Tool aria-label="Отменить"><UndoIcon /></Tool>
              <Drop aria-label="Список отмены"><Caret /></Drop>
              <Tool aria-label="Вернуть"><UndoIcon flip color="#a3b6da" /></Tool>
              <Drop aria-label="Список возврата"><Caret color="#8d9cb9" /></Drop>
              <Divider />
              <Tool aria-label="Автосумма"><SigmaIcon /></Tool>
              <Drop aria-label="Функции"><Caret /></Drop>
              <Divider />
              <Tool aria-label="Мастер диаграмм"><ChartIcon /></Tool>
              <Tool aria-label="Справка Excel"><HelpIcon /></Tool>
              <Spacer />
              <End more label="Параметры панели" />
            </Bar>
            <Bar $grow>
              <Grip />
              <Combo $width={127}>
                <select aria-label="Шрифт"><option>Arial</option></select>
                <DropCap><Caret /></DropCap>
              </Combo>
              <Gap />
              <Combo $width={39}>
                <select aria-label="Размер"><option>10</option></select>
                <DropCap><Caret /></DropCap>
              </Combo>
              <Divider />
              <Tool aria-label="Полужирный"><Letter>Ж</Letter></Tool>
              <Tool aria-label="Курсив"><Letter $italic>К</Letter></Tool>
              <Tool aria-label="Подчеркнутый"><Letter $under>Ч</Letter></Tool>
              <Divider />
              <Tool aria-label="По левому краю"><AlignIcon kind="left" /></Tool>
              <Tool aria-label="По центру"><AlignIcon kind="center" /></Tool>
              <Tool aria-label="По правому краю"><AlignIcon kind="right" /></Tool>
              <Tool aria-label="Объединить ячейки"><MergeIcon /></Tool>
              <Divider />
              <Tool aria-label="Денежный формат"><MoneyIcon /></Tool>
              <Tool aria-label="Увеличить разрядность"><DecimalIcon more /></Tool>
              <Tool aria-label="Уменьшить разрядность"><DecimalIcon /></Tool>
              <Divider />
              <Tool aria-label="Границы"><BordersIcon /></Tool>
              <Drop aria-label="Виды границ"><Caret /></Drop>
              <Tool aria-label="Цвет заливки"><FillIcon /></Tool>
              <Drop aria-label="Цвета заливки"><Caret /></Drop>
              <Tool aria-label="Цвет шрифта"><FontColorIcon /></Tool>
              <Drop aria-label="Цвета шрифта"><Caret /></Drop>
              <Spacer />
              <End more label="Параметры форматирования" />
            </Bar>
          </ToolRow>
          <ToolRow>
            <Bar $width={579}>
              <Grip />
              <Tool aria-label="Создать примечание"><NoteIcon kind="new" /></Tool>
              <Tool aria-label="Предыдущее примечание"><NoteIcon kind="prev" /></Tool>
              <Tool aria-label="Следующее примечание"><NoteIcon kind="next" /></Tool>
              <Tool aria-label="Показать примечание"><NoteIcon kind="show" /></Tool>
              <Tool aria-label="Показать все примечания"><NoteIcon kind="all" /></Tool>
              <Tool aria-label="Удалить примечание"><NoteIcon kind="delete" /></Tool>
              <Divider />
              <Tool aria-label="Показать рукописные данные"><InkShowIcon /></Tool>
              <Tool aria-label="Удалить рукописные данные"><InkDeleteIcon /></Tool>
              <Divider />
              <Tool aria-label="Создать задачу"><TaskIcon /></Tool>
              <Tool aria-label="Обновить файл"><UpdateIcon /></Tool>
              <Tool aria-label="Отправить вложением"><AttachIcon /></Tool>
              <Divider />
              <TextTool><ReplyIcon />&nbsp;Ответить с&nbsp;<u>и</u>зменениями...</TextTool>
              <TextTool>Закон<u>ч</u>ить проверку...</TextTool>
              <Spacer />
              <End label="Параметры рецензирования" />
            </Bar>
          </ToolRow>
          <FormulaBar>
            <NameBox aria-label="Имя ячейки" defaultValue="H14" />
            <FormulaTools>
              <FormulaDrop aria-label="Список имен"><WideCaret /></FormulaDrop>
              <FxButton aria-label="Вставка функции">fx</FxButton>
            </FormulaTools>
            <FormulaInput aria-label="Строка формул" />
          </FormulaBar>
          <SheetArea>
            <GridView><Sheet /></GridView>
            <VerticalScroll>
              <SplitBox />
              <ScrollButton aria-label="Вверх"><Chevron turn={0} /></ScrollButton>
              <Track>
                <Thumb $size={496}><Ridges /></Thumb>
                <TrackRest $size={37} />
              </Track>
              <ScrollButton aria-label="Вниз"><Chevron turn={180} /></ScrollButton>
            </VerticalScroll>
          </SheetArea>
          <SheetFooter>
            <TabStrip>
              {navPaths.map((d, i) => (
                <TabNav key={i} aria-label={navLabels[i]}>
                  <svg width="6" height="7" shapeRendering="crispEdges"><path d={d} /></svg>
                </TabNav>
              ))}
              <TabStart />
              <Edge back />
              <Tab $width={156}>Экзаменационная сессия</Tab>
              <Edge />
              <Tab $width={90}>Средний балл</Tab>
              <Edge back fill="right" />
              <Tab $active $width={132}>Итоговая ведомость</Tab>
              <Edge fill="left" />
            </TabStrip>
            <HorizontalScroll>
              <SplitBox $side />
              <ScrollButton aria-label="Влево"><Chevron turn={270} /></ScrollButton>
              <Track $across>
                <Thumb $across $size={293}><Ridges $across /></Thumb>
                <TrackRest $size={60} />
              </Track>
              <ScrollButton aria-label="Вправо"><Chevron turn={90} /></ScrollButton>
              <SplitBox $side />
            </HorizontalScroll>
          </SheetFooter>
          <StatusBar>
            <StatusText>Готово</StatusText>
            <StatusCell $width={34} />
            <StatusCell $width={112} />
            <StatusCell $width={26} />
            <StatusCell $width={30}>CAPS</StatusCell>
            <StatusCell $width={26}>NUM</StatusCell>
            <StatusCell $width={29} />
            <StatusCell $width={25} />
            <StatusCell $width={33} />
            <svg width="19" height="15" viewBox="0 0 19 15" fill="#b8b4a3">
              <path d="M15 3h2v2h-2zM15 7h2v2h-2zM15 11h2v2h-2zM11 7h2v2h-2zM11 11h2v2h-2zM7 11h2v2H7z" />
            </svg>
          </StatusBar>
        </Client>
        <WindowBottom />
      </Window>
      <Taskbar>
        <StartButton><WindowsFlag />пуск</StartButton>
        <Task><WordIcon />задача 18 - Microsof...</Task>
        <Task $active><ExcelIcon />Microsoft Excel - Экз...</Task>
        <Language>RU</Language>
        <Tray>
          <TrayToggle aria-label="Показать скрытые значки">
            <svg width="8" height="8"><path d="M5.500 1 2.500 4l3 3" fill="none" stroke="#fff" strokeWidth="1.800" /></svg>
          </TrayToggle>
          <MessengerIcon />
          <AntivirusIcon />
          <Clock>21:18</Clock>
        </Tray>
      </Taskbar>
    </Desktop>
  );
}
